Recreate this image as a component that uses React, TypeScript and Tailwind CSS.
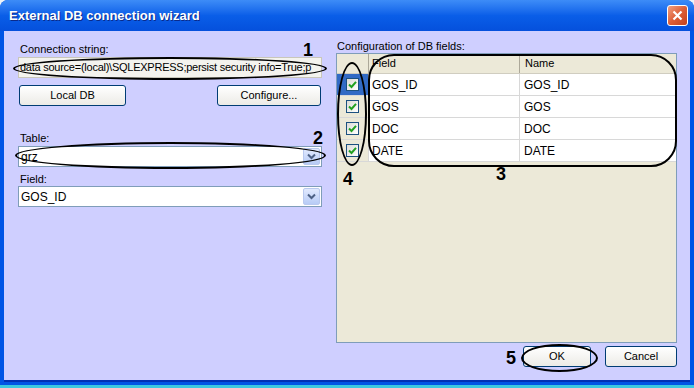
import React from "react";

const rows = ["GOS_ID", "GOS", "DOC", "DATE"];

function Check() {
  return (
    <span className="flex h-[13px] w-[13px] items-center justify-center border border-[#1c5180] bg-gradient-to-br from-[#dcdcd6] to-white">
      <svg width="9" height="9" viewBox="0 0 9 9">
        <path d="M1 4.5 L3.5 7 L8 1.8" fill="none" stroke="#21a121" strokeWidth="2" />
      </svg>
    </span>
  );
}

function Arrow() {
  return (
    <span className="flex h-[17px] w-[17px] items-center justify-center rounded-[2px] border border-[#b9c9ef] bg-gradient-to-b from-[#e2eafe] to-[#b7cbf6]">
      <svg width="9" height="7" viewBox="0 0 9 7">
        <path d="M1 1.5 L4.5 5 L8 1.5" fill="none" stroke="#4d6185" strokeWidth="2" />
      </svg>
    </span>
  );
}

function XpButton({ label, w }: { label: string; w: string }) {
  return (
    <div
      className={`${w} flex h-[21px] items-center justify-center rounded-[3px] border border-[#003c74] bg-gradient-to-b from-white to-[#ecebe6] text-[11px] text-black`}
    >
      {label}
    </div>
  );
}

function Combo({ value }: { value: string }) {
  return (
    <div className="flex h-[21px] w-[304px] items-center justify-between border border-[#7f9db9] bg-white pl-[2px] pr-[1px] text-[12px] text-black">
      <span>{value}</span>
      <Arrow />
    </div>
  );
}

export default function App() {
  return (
    <div
      className="relative h-[388px] w-[694px] overflow-hidden bg-[#eef4f8]"
      style={{ fontFamily: "'Liberation Sans', Arial, sans-serif" }}
    >
      <div className="flex h-[385px] flex-col rounded-t-[8px] bg-[#0055e5]">
        {/* title bar */}
        <div className="flex h-[31px] items-center justify-between rounded-t-[8px] bg-gradient-to-b from-[#3d8cf7] via-[#0a5ee8] to-[#0550dc] pl-[9px] pr-[6px]">
          <span className="text-[13px] font-bold text-white [text-shadow:1px_1px_0_#0a2a8a]">
            External DB connection wizard
          </span>
          <span className="flex h-[21px] w-[21px] items-center justify-center rounded-[3px] border border-white bg-gradient-to-br from-[#f0a080] via-[#dd5e36] to-[#c2411c]">
            <svg width="11" height="11" viewBox="0 0 11 11">
              <path d="M1.5 1.5 L9.5 9.5 M9.5 1.5 L1.5 9.5" stroke="white" strokeWidth="2.2" />
            </svg>
          </span>
        </div>
        {/* body */}
        <div className="mx-[4px] mb-[3px] flex flex-1 border-b-[2px] border-[#0031b4] bg-[#cfcfff] pl-[14px]">
          {/* left column */}
          <div className="flex w-[304px] flex-col pt-[10px] text-[11px] text-black">
            <span className="h-[16px] pl-[2px]">Connection string:</span>
            <div className="flex h-[21px] items-center overflow-hidden whitespace-nowrap border border-[#c9c7ba] bg-[#f4f3ee] pl-[1px] text-[11px] tracking-[-0.25px]">
              data source=(local)\SQLEXPRESS;persist security info=True;p
            </div>
            <div className="mt-[7px] flex justify-between pl-[1px] pr-[1px]">
              <XpButton label="Local DB" w="w-[107px]" />
              <XpButton label="Configure..." w="w-[104px]" />
            </div>
            <span className="mt-[24px] h-[16px] pl-[2px]">Table:</span>
            <Combo value="grz" />
            <span className="mt-[4px] h-[15px] pl-[2px]">Field:</span>
            <Combo value="GOS_ID" />
          </div>
          {/* right column */}
          <div className="ml-[14px] flex w-[341px] flex-col pt-[9px]">
            <span className="h-[13px] pl-[1px] text-[11px] leading-[13px] text-black">
              Configuration of DB fields:
            </span>
            <div className="h-[290px] border border-[#7f9db9] bg-[#ece9d8]">
              <div className="flex h-[20px] border-b border-[#d0cdc0] text-[11px] text-black">
                <div className="w-[32px] border-r border-[#aca899]" />
                <div className="flex w-[151px] items-center border-r border-[#aca899] pl-[3px]">Field</div>
                <div className="flex flex-1 items-center pl-[5px]">Name</div>
              </div>
              {rows.map((r, i) => (
                <div key={r} className="flex h-[22px] border-b border-[#d8d8d8] text-[12px] text-black">
                  <div
                    className={`flex w-[32px] items-center justify-center border-r border-[#d8d8d8] ${
                      i === 0 ? "bg-[#316ac5]" : "bg-[#ece9d8]"
                    }`}
                  >
                    <Check />
                  </div>
                  <div className="flex w-[151px] items-center border-r border-[#d8d8d8] bg-white pl-[3px]">{r}</div>
                  <div className="flex flex-1 items-center bg-white pl-[4px]">{r}</div>
                </div>
              ))}
            </div>
            <div className="mt-[3px] flex justify-end gap-[14px]">
              <XpButton label="OK" w="w-[68px]" />
              <XpButton label="Cancel" w="w-[72px]" />
            </div>
          </div>
        </div>
      </div>
      <div className="h-[3px] bg-[#3cc8e0]" />

      {/* annotations */}
      <div className="absolute left-[13px] top-[57px] h-[23px] w-[314px] rounded-[50%] border-[2px] border-black" />
      <div className="absolute left-[15px] top-[142px] h-[27px] w-[311px] rounded-[50%] border-[2px] border-black" />
      <div className="absolute left-[368px] top-[54px] h-[113px] w-[309px] rounded-[26px] border-[2px] border-black" />
      <div className="absolute left-[337px] top-[62px] h-[104px] w-[30px] rounded-[50%] border-[2px] border-black" />
      <div className="absolute left-[521px] top-[344px] h-[28px] w-[77px] rounded-[50%] border-[2px] border-black" />
      <span className="absolute left-[303px] top-[37px] text-[18px] font-bold text-black">1</span>
      <span className="absolute left-[313px] top-[125px] text-[18px] font-bold text-black">2</span>
      <span className="absolute left-[496px] top-[161px] text-[18px] font-bold text-black">3</span>
      <span className="absolute left-[343px] top-[166px] text-[18px] font-bold text-black">4</span>
      <span className="absolute left-[506px] top-[345px] text-[18px] font-bold text-black">5</span>
    </div>
  );
}
